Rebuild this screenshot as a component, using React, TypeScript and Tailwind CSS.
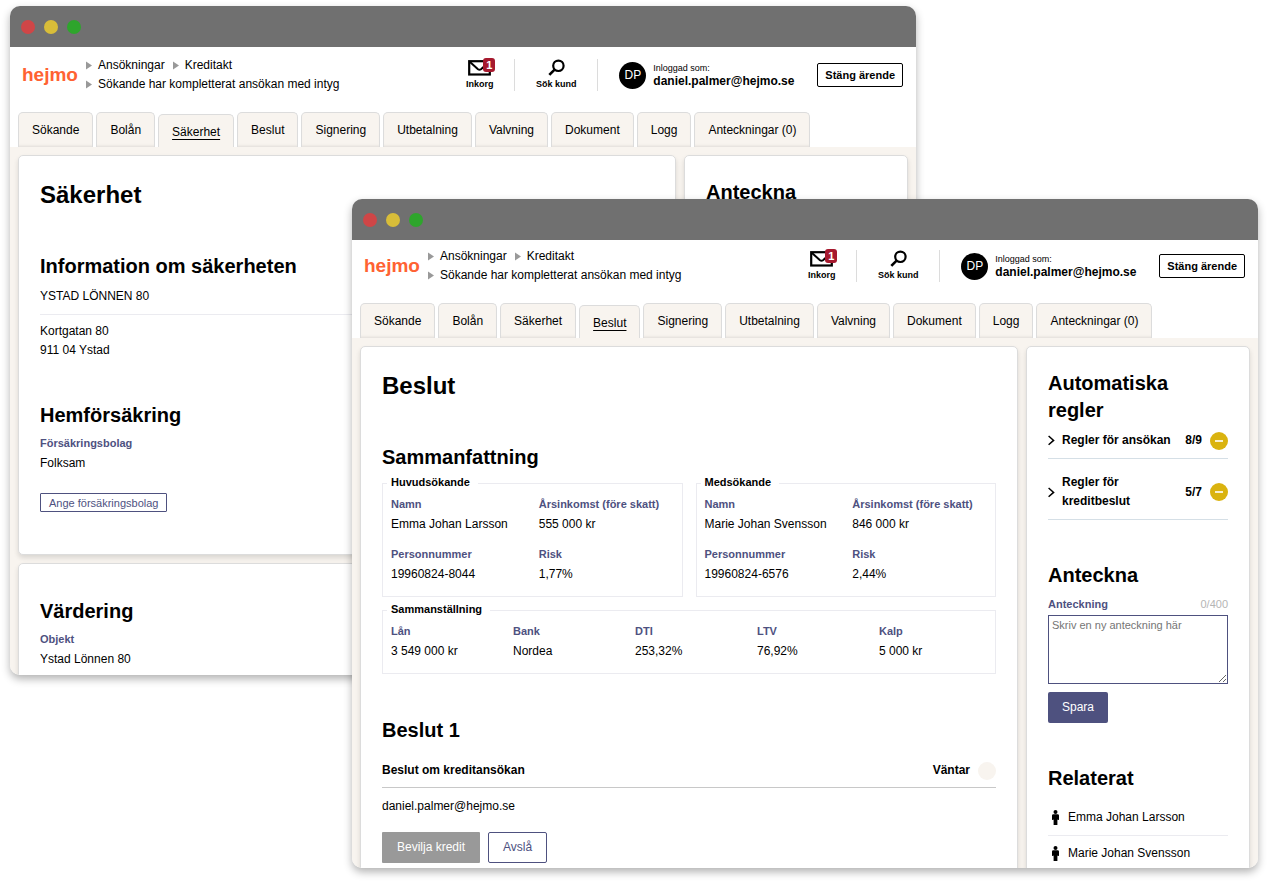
import type { ReactNode } from 'react';

const tabs = [
  'Sökande',
  'Bolån',
  'Säkerhet',
  'Beslut',
  'Signering',
  'Utbetalning',
  'Valvning',
  'Dokument',
  'Logg',
  'Anteckningar (0)',
];

function Triangle() {
  return (
    <svg className="h-[9px] w-[6px] shrink-0" viewBox="0 0 6 9" aria-hidden="true">
      <path d="M0 0.5 6 4.5 0 8.5Z" fill="#999" />
    </svg>
  );
}

function Crumb({ children }: { children: ReactNode }) {
  return (
    <a href="#" className="flex items-center gap-[6px]">
      <Triangle />
      {children}
    </a>
  );
}

function Divider() {
  return <div className="h-8 w-px bg-[#dcdcdc]" />;
}

function Header({ active, className }: { active: string; className: string }) {
  return (
    <header className={`px-2 ${className}`}>
      <div className="flex h-[38px] items-center justify-between pr-[5px] pl-1">
        <div className="flex items-center gap-2">
          <a href="#" className="text-[19px] leading-6 font-bold text-[#ff6232]">
            hejmo
          </a>
          <nav aria-label="Sökväg" className="leading-[19px]">
            <div className="flex gap-2">
              <Crumb>Ansökningar</Crumb>
              <Crumb>Kreditakt</Crumb>
            </div>
            <Crumb>Sökande har kompletterat ansökan med intyg</Crumb>
          </nav>
        </div>
        <div className="flex items-center gap-[21px]">
          <button type="button" className="flex w-[27px] flex-col items-center gap-[3px] pb-[3px] text-[9px] leading-[10px] font-bold">
            <span className="relative">
              <svg className="h-[17px] w-[23px]" viewBox="0 0 23 17" fill="none" stroke="#000" aria-hidden="true">
                <rect x="1.2" y="2.2" width="20.6" height="13.3" strokeWidth="2.2" />
                <path d="M2 3 10 10.2Q11.5 11.3 13 10.2L21 3" strokeWidth="2" />
              </svg>
              <span className="absolute -top-px left-[15px] flex h-[14px] w-3 items-center justify-center rounded-[3px] bg-[#a6192e] text-[11px] text-white">
                1
              </span>
            </span>
            Inkorg
          </button>
          <Divider />
          <button type="button" className="flex w-10 flex-col items-center gap-[3px] pb-[3px] text-[9px] leading-[10px] font-bold whitespace-nowrap">
            <svg className="h-[17px] w-[17px]" viewBox="0 0 17 17" fill="none" stroke="#000" aria-hidden="true">
              <circle cx="10.4" cy="6.8" r="5.2" strokeWidth="2.2" />
              <path d="M6.6 10.6 1.3 15.9" strokeWidth="2.6" />
            </svg>
            Sök kund
          </button>
          <Divider />
          <div className="flex items-center gap-[7px]">
            <div className="flex h-[27px] w-[27px] items-center justify-center rounded-full bg-black text-white">DP</div>
            <div className="w-[143px]">
              <div className="text-[9px] leading-[11px]">Inloggad som:</div>
              <div className="leading-[14px] font-bold">daniel.palmer@hejmo.se</div>
            </div>
          </div>
          <button type="button" className="h-6 rounded-[2px] border border-black px-[7px] text-[11px] font-bold whitespace-nowrap">
            Stäng ärende
          </button>
        </div>
      </div>
      <nav aria-label="Flikar" className="mt-[18px] flex h-[35px] items-end gap-[3px]">
        {tabs.map((tab) =>
          tab === active ? (
            <a
              key={tab}
              href="#"
              aria-current="page"
              className="flex h-[33px] items-center rounded-t-[5px] border border-b-0 border-[#dcdcdc] bg-[#f8f4ef] px-[13px] pt-[3px] whitespace-nowrap underline underline-offset-[3px]"
            >
              {tab}
            </a>
          ) : (
            <a
              key={tab}
              href="#"
              className="flex h-[35px] items-center rounded-t-[5px] border border-b-0 border-[#dcdcdc] bg-[#f8f4ef] px-[13px] whitespace-nowrap shadow-[inset_0_-3px_3px_-2px_rgba(0,0,0,0.1)]"
            >
              {tab}
            </a>
          ),
        )}
      </nav>
    </header>
  );
}

function AppWindow({
  active,
  className,
  headerClass,
  main,
  side,
}: {
  active: string;
  className: string;
  headerClass: string;
  main: ReactNode;
  side: ReactNode;
}) {
  return (
    <section
      aria-label={active}
      className={`absolute flex min-w-[880px] flex-col overflow-hidden rounded-[10px] bg-white shadow-[0_4px_9px_rgba(0,0,0,0.3)] ${className}`}
    >
      <div className="flex h-[41px] shrink-0 items-center gap-[9px] bg-[#707070] px-[11px]">
        <span className="h-[14px] w-[14px] rounded-full bg-[#cf4647]" />
        <span className="h-[14px] w-[14px] rounded-full bg-[#d8bd39]" />
        <span className="h-[14px] w-[14px] rounded-full bg-[#2ea52c]" />
      </div>
      <Header active={active} className={headerClass} />
      <div className="flex min-h-0 flex-1 items-start gap-2 bg-[#f8f4ef] p-2">
        <main className="flex min-w-0 flex-1 flex-col gap-2">{main}</main>
        <aside className="w-[224px] shrink-0">{side}</aside>
      </div>
    </section>
  );
}

function Card({ className, children }: { className: string; children: ReactNode }) {
  return (
    <div className={`rounded-[5px] border border-[#dcdcdc] bg-white px-[21px] pb-[42px] shadow-[0_3px_5px_rgba(0,0,0,0.12)] ${className}`}>
      {children}
    </div>
  );
}

function H1({ children }: { children: ReactNode }) {
  return <h1 className="text-2xl leading-8 font-bold">{children}</h1>;
}

function H2({ children }: { children: ReactNode }) {
  return <h2 className="text-xl leading-[27px] font-bold">{children}</h2>;
}

function Field({ label, value }: { label: string; value: string }) {
  return (
    <div className="whitespace-nowrap">
      <dt className="text-[11px] leading-4 font-bold text-[#4e517f]">{label}</dt>
      <dd className="mt-[3px]">{value}</dd>
    </div>
  );
}

function Group({ title, grid, fields }: { title: string; grid: string; fields: [string, string][] }) {
  return (
    <fieldset className="min-w-0 border border-[#ebebf0] px-2 pb-3">
      <legend className="-ml-1 h-[15px] pr-2 pl-1 text-[11px] leading-3 font-bold">{title}</legend>
      <dl className={`grid gap-y-3 pt-[5px] ${grid}`}>
        {fields.map(([label, value]) => (
          <Field key={label} label={label} value={value} />
        ))}
      </dl>
    </fieldset>
  );
}

function Rule({ title, score, className }: { title: string; score: string; className: string }) {
  return (
    <button type="button" className={`flex w-full items-center border-b border-[#d5dfe6] pb-2 text-left font-bold ${className}`}>
      <svg className="h-[11px] w-[7px] shrink-0" viewBox="0 0 7 11" fill="none" stroke="#000" strokeWidth="1.5" aria-hidden="true">
        <path d="M0.6 1 5.6 5.4 0.6 9.8" />
      </svg>
      <span className="ml-[7px] min-w-0 flex-1">{title}</span>
      <span>{score}</span>
      <svg className="ml-2 h-[18px] w-[18px] shrink-0" viewBox="0 0 18 18" aria-hidden="true">
        <circle cx="9" cy="9" r="9" fill="#dab30f" />
        <path d="M5 9H13" stroke="#fff" strokeWidth="1.6" />
      </svg>
    </button>
  );
}

function Person({ name, className }: { name: string; className: string }) {
  return (
    <li className={className}>
      <a href="#" className="flex items-center gap-[9px] pl-1">
        <svg className="h-[15px] w-[7px]" viewBox="0 0 7 15" aria-hidden="true">
          <circle cx="3.5" cy="2" r="2" />
          <path d="M1.4 4.2h4.2Q7 4.2 7 5.6V9.4Q6.3 10.4 5.4 9.6V15H1.6V9.6Q0.7 10.4 0 9.4V5.6Q0 4.2 1.4 4.2Z" />
        </svg>
        {name}
      </a>
    </li>
  );
}

function SecurityMain() {
  return (
    <>
      <Card className="pt-[23px]">
        <H1>Säkerhet</H1>
        <div className="mt-[42px]">
          <H2>Information om säkerheten</H2>
          <p className="mt-[7px] border-b border-[#ebebf0] pb-2">YSTAD LÖNNEN 80</p>
          <p className="mt-[7px]">
            Kortgatan 80
            <br />
            911 04 Ystad
          </p>
        </div>
        <div className="mt-[42px]">
          <H2>Hemförsäkring</H2>
          <dl className="mt-[6px]">
            <Field label="Försäkringsbolag" value="Folksam" />
          </dl>
          <button
            type="button"
            className="mt-5 block h-[19px] rounded-[1px] border border-[#4e517f] px-2 text-[11px] leading-4 text-[#4e517f]"
          >
            Ange försäkringsbolag
          </button>
        </div>
      </Card>
      <Card className="pt-[34px]">
        <H2>Värdering</H2>
        <dl className="mt-[6px]">
          <Field label="Objekt" value="Ystad Lönnen 80" />
        </dl>
      </Card>
    </>
  );
}

function DecisionMain() {
  return (
    <Card className="pt-[23px]">
      <H1>Beslut</H1>
      <div className="mt-[42px]">
        <H2>Sammanfattning</H2>
        <div className="mt-[5px] grid grid-cols-2 gap-x-[13px]">
          <Group
            title="Huvudsökande"
            grid="grid-cols-2 gap-x-[13px]"
            fields={[
              ['Namn', 'Emma Johan Larsson'],
              ['Årsinkomst (före skatt)', '555 000 kr'],
              ['Personnummer', '19960824-8044'],
              ['Risk', '1,77%'],
            ]}
          />
          <Group
            title="Medsökande"
            grid="grid-cols-2 gap-x-[13px]"
            fields={[
              ['Namn', 'Marie Johan Svensson'],
              ['Årsinkomst (före skatt)', '846 000 kr'],
              ['Personnummer', '19960824-6576'],
              ['Risk', '2,44%'],
            ]}
          />
        </div>
        <div className="mt-[6px]">
          <Group
            title="Sammanställning"
            grid="grid-cols-5 gap-x-[14px]"
            fields={[
              ['Lån', '3 549 000 kr'],
              ['Bank', 'Nordea'],
              ['DTI', '253,32%'],
              ['LTV', '76,92%'],
              ['Kalp', '5 000 kr'],
            ]}
          />
        </div>
      </div>
      <div className="mt-[43px]">
        <H2>Beslut 1</H2>
        <div className="mt-[17px] flex items-center border-b border-[#c8c8c8] pb-[7px] font-bold">
          <span className="flex-1">Beslut om kreditansökan</span>
          <span>Väntar</span>
          <span className="ml-2 h-[18px] w-[18px] rounded-full bg-[#f8f4ef]" />
        </div>
        <p className="mt-[9px]">daniel.palmer@hejmo.se</p>
        <div className="mt-4 flex gap-2">
          <button type="button" className="h-[31px] rounded-[1px] bg-[#999] px-[15px] text-white">
            Bevilja kredit
          </button>
          <button type="button" className="h-[31px] rounded-[2px] border border-[#4e517f] px-[14px] text-[#4e517f]">
            Avslå
          </button>
        </div>
      </div>
    </Card>
  );
}

function DecisionSide() {
  return (
    <Card className="pt-[23px]">
      <H2>Automatiska regler</H2>
      <Rule title="Regler för ansökan" score="8/9" className="mt-[7px]" />
      <Rule title="Regler för kreditbeslut" score="5/7" className="mt-[14px]" />
      <div className="mt-[42px]">
        <H2>Anteckna</H2>
        <div className="mt-[7px] flex justify-between text-[11px] leading-4">
          <label htmlFor="note" className="font-bold text-[#4e517f]">
            Anteckning
          </label>
          <span className="text-[#b5b5b5]">0/400</span>
        </div>
        <textarea
          id="note"
          placeholder="Skriv en ny anteckning här"
          className="mt-[3px] block h-[69px] w-full resize border border-[#4e517f] px-[3px] py-[2px] text-[11px] leading-[14px] placeholder:text-[#757575]"
        />
        <button type="button" className="mt-2 block h-[31px] rounded-[2px] bg-[#4e517f] px-[14px] text-white">
          Spara
        </button>
      </div>
      <div className="mt-[42px]">
        <H2>Relaterat</H2>
        <ul className="mt-4">
          <Person name="Emma Johan Larsson" className="border-b border-[#ebebf0] pb-2" />
          <Person name="Marie Johan Svensson" className="pt-2" />
        </ul>
      </div>
    </Card>
  );
}

export default function App() {
  return (
    <div className="relative h-screen min-h-[600px] min-w-[1250px] overflow-hidden bg-white font-['Liberation_Sans',Arial,sans-serif] text-xs leading-[19px] text-black">
      <AppWindow
        active="Säkerhet"
        className="top-[6px] right-[352px] bottom-[207px] left-[10px]"
        headerClass="pt-[9px]"
        main={<SecurityMain />}
        side={
          <Card className="pt-[23px]">
            <H2>Anteckna</H2>
          </Card>
        }
      />
      <AppWindow
        active="Beslut"
        className="top-[199px] right-[10px] bottom-[14px] left-[352px]"
        headerClass="pt-[7px]"
        main={<DecisionMain />}
        side={<DecisionSide />}
      />
    </div>
  );
}
